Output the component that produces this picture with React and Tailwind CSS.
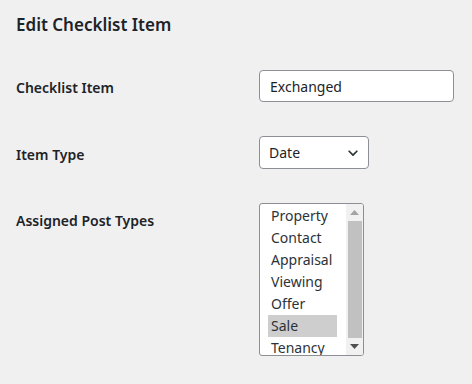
import React from 'react';

const postTypes = ['Property', 'Contact', 'Appraisal', 'Viewing', 'Offer', 'Sale', 'Tenancy'];

const Label = ({ children }) => (
    <div className="w-[243px] shrink-0 text-[14px] font-semibold text-[#1d2327]">{children}</div>
);

const App = () => {
    return (
        <div className="w-[472px] h-[384px] bg-[#f0f0f1] text-[#1d2327] font-['Noto_Sans',sans-serif] overflow-hidden">
            <h2 className="pl-4 pt-[12px] text-[17px] leading-[26px] font-semibold">Edit Checklist Item</h2>

            <div className="pl-4 mt-[32px] flex items-center h-[32px]">
                <div className="mt-[3px]"><Label>Checklist Item</Label></div>
                <div className="w-[195px] h-[32px] border border-[#8c8f94] rounded-[4px] bg-white px-[10px] flex items-center text-[14px]">
                    Exchanged
                </div>
            </div>

            <div className="pl-4 mt-[34px] flex items-center h-[33px]">
                <div className="mt-[3px]"><Label>Item Type</Label></div>
                <div className="w-[110px] h-[33px] border border-[#8c8f94] rounded-[4px] bg-white pl-[9px] pr-[8px] flex items-center justify-between text-[14px]">
                    <span>Date</span>
                    <svg width="14" height="14" viewBox="0 0 20 20" fill="none" stroke="#2c3338" strokeWidth="2.4" strokeLinecap="round" strokeLinejoin="round">
                        <path d="M4.5 7.5 10 13l5.5-5.5" />
                    </svg>
                </div>
            </div>

            <div className="pl-4 mt-[34px] flex items-start">
                <div className="mt-[7px]"><Label>Assigned Post Types</Label></div>
                <div className="w-[105px] h-[153px] border border-[#8c8f94] rounded-[3px] bg-white flex overflow-hidden">
                    <div className="flex-1 pl-[8px] pt-[1px] pr-[9px]">
                        {postTypes.map((t) => (
                            <div
                                key={t}
                                className={`h-[22px] leading-[22px] pl-[3px] text-[14px] text-[#2c3338] ${t === 'Sale' ? 'bg-[#cecece]' : ''}`}
                            >
                                {t}
                            </div>
                        ))}
                    </div>
                    <div className="w-[17px] bg-[#f1f1f1] flex flex-col items-center">
                        <div className="h-[17px] flex items-center justify-center">
                            <svg width="9" height="5" viewBox="0 0 9 5"><path d="M0 5 4.5 0 9 5z" fill="#a3a3a3" /></svg>
                        </div>
                        <div className="w-[14px] flex-1 bg-[#c1c1c1]" />
                        <div className="h-[17px] flex items-center justify-center">
                            <svg width="9" height="5" viewBox="0 0 9 5"><path d="M0 0h9L4.5 5z" fill="#505050" /></svg>
                        </div>
                    </div>
                </div>
            </div>
        </div>
    );
};

export default App;
